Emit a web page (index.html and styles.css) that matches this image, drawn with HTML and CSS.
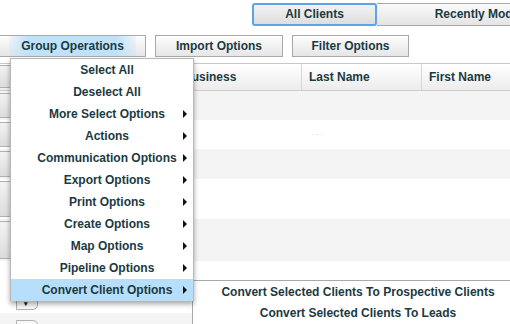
FILE: index.html
```html
<!DOCTYPE html>
<html lang="en">
<head>
    <meta charset="UTF-8">
    <title>Clients</title>
    <link rel="stylesheet" href="styles.css">
</head>
<body>
    <div class="tabs">
        <div class="tab selected">All Clients</div>
        <div class="tab">Recently Modified</div>
    </div>

    <div class="toolbar">
        <div class="btn group-btn"><span class="glow">Group Operations</span></div>
        <div class="btn import-btn">Import Options</div>
        <div class="btn filter-btn">Filter Options</div>
    </div>

    <div class="grid">
        <div class="row head">
            <div class="tool"></div>
            <div class="cell pre"></div>
            <div class="cell business">Business</div>
            <div class="cell last">Last Name</div>
            <div class="cell first">First Name</div>
        </div>
        <div class="row odd">
            <div class="tool"></div>
            <div class="cell pre"></div><div class="cell business"></div><div class="cell last"></div><div class="cell first"></div>
        </div>
        <div class="row">
            <div class="tool"></div>
            <div class="cell pre"></div><div class="cell business"></div><div class="cell last"><span class="dots">· · ·</span></div><div class="cell first"></div>
        </div>
        <div class="row odd r30">
            <div class="tool"></div>
            <div class="cell pre"></div><div class="cell business"></div><div class="cell last"></div><div class="cell first"></div>
        </div>
        <div class="row r40">
            <div class="tool"></div>
            <div class="cell pre"></div><div class="cell business"></div><div class="cell last"></div><div class="cell first"></div>
        </div>
        <div class="row odd r42">
            <div class="tool"></div>
            <div class="cell pre"></div><div class="cell business"></div><div class="cell last"></div><div class="cell first"></div>
        </div>
        <div class="row r52">
            <div class="tool drop"><span class="caret">▾</span></div>
            <div class="cell pre"></div><div class="cell business"></div><div class="cell last"></div><div class="cell first"></div>
        </div>
        <div class="row odd r42">
            <div class="tool drop next"></div>
            <div class="cell pre"></div><div class="cell business"></div><div class="cell last"></div><div class="cell first"></div>
        </div>
    </div>

    <ul class="menu">
        <li>Select All</li>
        <li>Deselect All</li>
        <li class="sub">More Select Options</li>
        <li class="sub">Actions</li>
        <li class="sub">Communication Options</li>
        <li class="sub">Export Options</li>
        <li class="sub">Print Options</li>
        <li class="sub">Create Options</li>
        <li class="sub">Map Options</li>
        <li class="sub">Pipeline Options</li>
        <li class="sub hover">Convert Client Options</li>
    </ul>

    <ul class="submenu">
        <li>Convert Selected Clients To Prospective Clients</li>
        <li>Convert Selected Clients To Leads</li>
    </ul>
</body>
</html>
```

FILE: styles.css
```css
body {
    margin: 0;
    width: 510px;
    height: 324px;
    overflow: hidden;
    position: relative;
    background-color: #fff;
    font-family: "Liberation Sans", Arial, sans-serif;
    font-size: 12px;
    font-weight: bold;
    color: #1b3a42;
}

/* top tabs */
.tabs {
    display: flex;
    padding: 3px 0 0 252px;
    height: 23px;
}
.tab {
    flex: none;
    height: 21px;
    line-height: 21px;
    text-align: center;
    border: 1px solid #a8a8a8;
    background: linear-gradient(#fafafa, #e4e4e4);
    white-space: nowrap;
}
.tab.selected {
    width: 121px;
    border: 2px solid #5ea3e6;
    height: 19px;
    line-height: 19px;
    border-radius: 3px;
    background: linear-gradient(#f2f2f2, #dedede);
}
.tab + .tab {
    width: 218px;
    border-left: none;
    border-radius: 0 3px 3px 0;
}

/* toolbar */
.toolbar {
    display: flex;
    margin-top: 9px;
    margin-left: -1px;
}
.btn {
    flex: none;
    height: 20px;
    line-height: 20px;
    text-align: center;
    border: 1px solid #a9a9a9;
    background: linear-gradient(#fdfdfd, #e6e6e6);
    white-space: nowrap;
}
.group-btn {
    width: 145px;
}
.glow {
    display: block;
    margin: 0 9px;
    background: linear-gradient(to right, rgba(190, 225, 250, 0.2), #bfe2fb 15%, #bfe2fb 85%, rgba(190, 225, 250, 0.2));
}
.import-btn {
    width: 126px;
    margin-left: 9px;
}
.filter-btn {
    width: 115px;
    margin-left: 9px;
}

/* table */
.grid {
    margin-top: 6px;
    border-top: 1px solid #c8c8c8;
}
.row {
    display: flex;
    height: 29px;
    background-color: #fff;
}
.row.odd {
    background-color: #f4f4f4;
}
.row.r30 { height: 30px; }
.row.r40 { height: 40px; }
.row.r42 { height: 42px; }
.row.r52 { height: 52px; }
.row.head {
    height: 26px;
    background: linear-gradient(#ffffff, #ececec);
    border-bottom: 1px solid #cfcfcf;
}
.tool {
    width: 36px;
    flex: none;
    margin: 2px 0;
    border: 1px solid #b0b0b0;
    border-left: none;
    background: linear-gradient(#f3f3f3, #dcdcdc);
    border-radius: 0 3px 3px 0;
    position: relative;
}
.head .tool {
    margin-top: 1px;
}
.tool.drop {
    width: 20px;
    margin: 2px 0 3px 16px;
    border-left: 1px solid #b0b0b0;
    background: #f8f8f8;
    border-radius: 0 0 5px 0;
}
.tool.drop.next {
    margin-top: 7px;
    border-radius: 0 5px 0 0;
}
.caret {
    position: absolute;
    left: 7px;
    bottom: 1px;
    font-size: 7px;
    color: #222;
}
.cell {
    flex: none;
    line-height: 26px;
    padding-left: 7px;
    box-sizing: border-box;
}
.pre {
    width: 139px;
    padding: 0;
}
.business {
    width: 125px;
}
.last {
    width: 120px;
    border-left: 1px solid #d6d6d6;
}
.first {
    width: 120px;
    border-left: 1px solid #d6d6d6;
}
.row:not(.head) .cell {
    border-left-color: transparent;
}
.dots {
    color: #c9c9c9;
    font-weight: normal;
    font-size: 8px;
    margin-left: 2px;
}

/* group operations menu */
.menu {
    position: absolute;
    left: 10px;
    top: 58px;
    width: 182px;
    margin: 0;
    padding: 0;
    list-style: none;
    background-color: #fff;
    border: 1px solid #b9b9b9;
    border-bottom: none;
    box-shadow: 0 3px 5px rgba(0, 0, 0, 0.35);
    z-index: 2;
}
.menu li {
    position: relative;
    height: 22px;
    line-height: 22px;
    text-align: center;
    padding: 0 8px 0 18px;
    white-space: nowrap;
}
.menu li.sub::after {
    content: "";
    position: absolute;
    right: 6px;
    top: 7px;
    border-left: 4px solid #111;
    border-top: 4px solid transparent;
    border-bottom: 4px solid transparent;
}
.menu li.hover {
    background-color: #b7defb;
}

/* convert client submenu */
.submenu {
    position: absolute;
    left: 192px;
    top: 280px;
    width: 330px;
    height: 60px;
    margin: 0;
    padding: 1px 0 0;
    list-style: none;
    background-color: #fff;
    border-top: 1px solid #a9a9a9;
    border-left: 1px solid #a9a9a9;
    z-index: 1;
}
.submenu li {
    height: 21px;
    line-height: 21px;
    text-align: center;
    white-space: nowrap;
}
```
